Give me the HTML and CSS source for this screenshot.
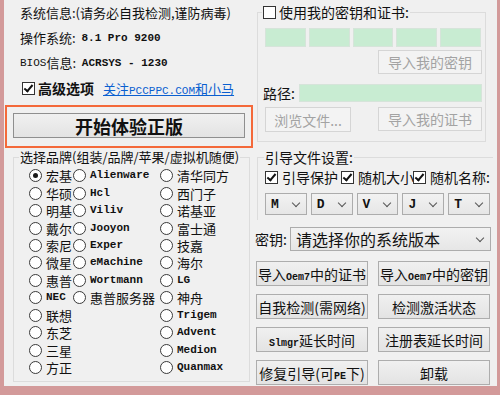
FILE: index.html
```html
<!DOCTYPE html>
<html lang="zh-CN">

<head>
	<meta charset="UTF-8" />
	<meta name="viewport" content="width=device-width, initial-scale=1.0" />
	<title>小马激活</title>
	<link rel="stylesheet" href="styles.css">
</head>

<body>
	<div class="window">
		<div class="left">
			<div class="info">
				<div class="line">系统信息:(请务必自我检测,谨防病毒)</div>
				<div class="line">操作系统:  <span class="mono">8.1 Pro 9200</span></div>
				<div class="line"><span class="mono-n">BIOS</span>信息:  <span class="mono">ACRSYS - 1230</span></div>
				<div class="line">
					<span class="check on"></span><b class="adv">高级选项</b>
					<a class="link" href="#">关注<span class="mono-link">PCCPPC.COM</span>和小马</a>
				</div>
			</div>

			<div class="start_wrap">
				<div class="btn start">开始体验正版</div>
			</div>

			<fieldset class="group brands">
				<legend>选择品牌(组装/品牌/苹果/虚拟机随便)</legend>
				<div class="brand_grid">
					<label class="opt"><span class="radio on"></span>宏基</label>
					<label class="opt"><span class="radio"></span><span class="mono">Alienware</span></label>
					<label class="opt"><span class="radio"></span>清华同方</label>

					<label class="opt"><span class="radio"></span>华硕</label>
					<label class="opt"><span class="radio"></span><span class="mono">Hcl</span></label>
					<label class="opt"><span class="radio"></span>西门子</label>

					<label class="opt"><span class="radio"></span>明基</label>
					<label class="opt"><span class="radio"></span><span class="mono">Viliv</span></label>
					<label class="opt"><span class="radio"></span>诺基亚</label>

					<label class="opt"><span class="radio"></span>戴尔</label>
					<label class="opt"><span class="radio"></span><span class="mono">Jooyon</span></label>
					<label class="opt"><span class="radio"></span>富士通</label>

					<label class="opt"><span class="radio"></span>索尼</label>
					<label class="opt"><span class="radio"></span><span class="mono">Exper</span></label>
					<label class="opt"><span class="radio"></span>技嘉</label>

					<label class="opt"><span class="radio"></span>微星</label>
					<label class="opt"><span class="radio"></span><span class="mono">eMachine</span></label>
					<label class="opt"><span class="radio"></span>海尔</label>

					<label class="opt"><span class="radio"></span>惠普</label>
					<label class="opt"><span class="radio"></span><span class="mono">Wortmann</span></label>
					<label class="opt"><span class="radio"></span><span class="mono">LG</span></label>

					<label class="opt"><span class="radio"></span><span class="mono">NEC</span></label>
					<label class="opt"><span class="radio"></span>惠普服务器</label>
					<label class="opt"><span class="radio"></span>神舟</label>

					<label class="opt"><span class="radio"></span>联想</label>
					<span></span>
					<label class="opt"><span class="radio"></span><span class="mono">Trigem</span></label>

					<label class="opt"><span class="radio"></span>东芝</label>
					<span></span>
					<label class="opt"><span class="radio"></span><span class="mono">Advent</span></label>

					<label class="opt"><span class="radio"></span>三星</label>
					<span></span>
					<label class="opt"><span class="radio"></span><span class="mono">Medion</span></label>

					<label class="opt"><span class="radio"></span>方正</label>
					<span></span>
					<label class="opt"><span class="radio"></span><span class="mono">Quanmax</span></label>
				</div>
			</fieldset>
		</div>

		<div class="right">
			<fieldset class="group mykey">
				<legend><span class="check"></span>使用我的密钥和证书:</legend>
				<div class="key_boxes">
					<div class="field"></div>
					<div class="field"></div>
					<div class="field"></div>
					<div class="field"></div>
					<div class="field"></div>
				</div>
				<div class="row_end">
					<div class="btn off w104">导入我的密钥</div>
				</div>
				<div class="path_row">
					<span class="path_label">路径:</span>
					<div class="field path"></div>
				</div>
				<div class="row_split">
					<div class="btn off w86">浏览文件...</div>
					<div class="btn off w104">导入我的证书</div>
				</div>
			</fieldset>

			<fieldset class="group boot">
				<legend>引导文件设置:</legend>
				<div class="boot_checks">
					<label class="opt c1"><span class="check on"></span>引导保护</label>
					<label class="opt c2"><span class="check on"></span>随机大小</label>
					<label class="opt"><span class="check on"></span>随机名称:</label>
				</div>
				<div class="boot_combos">
					<div class="combo"><span class="mono">M</span><span class="chev"></span></div>
					<div class="combo"><span class="mono">D</span><span class="chev"></span></div>
					<div class="combo"><span class="mono">V</span><span class="chev"></span></div>
					<div class="combo"><span class="mono">J</span><span class="chev"></span></div>
					<div class="combo"><span class="mono">T</span><span class="chev"></span></div>
				</div>
			</fieldset>

			<div class="key_row">
				<span>密钥:</span>
				<div class="combo big"><span>请选择你的系统版本</span><span class="chev"></span></div>
			</div>

			<div class="actions">
				<div class="btn"><span>导入<span class="mono-s">Oem7</span>中的证书</span></div>
				<div class="btn"><span>导入<span class="mono-s">Oem7</span>中的密钥</span></div>
				<div class="btn"><span>自我检测(需网络)</span></div>
				<div class="btn"><span>检测激活状态</span></div>
				<div class="btn"><span><span class="mono-s">Slmgr</span>延长时间</span></div>
				<div class="btn"><span>注册表延长时间</span></div>
				<div class="btn"><span>修复引导(可<span class="mono-s">PE</span>下)</span></div>
				<div class="btn"><span>卸载</span></div>
			</div>
		</div>
	</div>
</body>

</html>
```

FILE: styles.css
```css
html,
body {
	margin: 0;
	padding: 0;
}

body {
	width: 500px;
	height: 395px;
	background-color: #d39a9a;
	font-family: "Noto Sans CJK SC", "Noto Sans", sans-serif;
	font-size: 13px;
	color: #111;
	overflow: hidden;
}

.window {
	display: flex;
	margin: 0 3px 0 4px;
	height: 386px;
	background-color: #f0f0f0;
}

.mono {
	font-family: "Liberation Mono", monospace;
	font-size: 11px;
	font-weight: bold;
}

.mono-n {
	font-family: "Liberation Mono", monospace;
	font-size: 11px;
}

.mono-s {
	font-family: "Liberation Mono", monospace;
	font-size: 10px;
	font-weight: bold;
}

/* left side */

.left {
	width: 250px;
	flex: none;
}

.info {
	padding-left: 16px;
}

.line {
	display: flex;
	align-items: center;
	height: 25px;
	white-space: pre;
}

.line:last-child {
	height: 26px;
	padding-left: 2px;
}

.adv {
	font-size: 14px;
	margin-left: 3px;
}

.link {
	margin-left: 9px;
	color: #0a5fd0;
	text-decoration: underline;
	font-size: 13px;
}

.mono-link {
	font-family: "Liberation Mono", monospace;
	font-size: 11px;
}

.start_wrap {
	margin: 4px 0 0 1px;
	width: 248px;
	box-sizing: border-box;
	border: 2px solid #f4693a;
	padding: 6px 6px 8px 6px;
}

.btn {
	display: flex;
	align-items: center;
	justify-content: center;
	box-sizing: border-box;
	border: 1px solid #adadad;
	background: linear-gradient(#f0f0f0, #e3e3e3);
	font-size: 14px;
	white-space: pre;
}

.btn.off {
	border-color: #d5d5d5;
	background: #f3f3f3;
	color: #a3a3a3;
}

.start {
	height: 25px;
	font-size: 18px;
	font-weight: bold;
	border-color: #8f8f8f;
}

.group {
	margin: 0;
	padding: 0;
	border: 1px solid #dcdcdc;
	min-width: 0;
}

.group legend {
	padding: 0 1px;
	line-height: 16px;
}

.brands {
	margin: 1px 0 0 9px;
	width: 237px;
	box-sizing: border-box;
	height: 233px;
}

.brands legend {
	margin-left: 5px;
}

.brand_grid {
	display: grid;
	grid-template-columns: 44px 87px 1fr;
	grid-auto-rows: 17.45px;
	padding: 2px 0 0 15px;
}

.opt {
	display: flex;
	align-items: center;
	gap: 4px;
	font-size: 13px;
	line-height: 17px;
	white-space: nowrap;
}

.radio {
	flex: none;
	width: 13px;
	height: 13px;
	box-sizing: border-box;
	border: 1px solid #3a3a3a;
	border-radius: 50%;
	background-color: #fff;
	display: flex;
	align-items: center;
	justify-content: center;
}

.radio.on::after {
	content: "";
	width: 5px;
	height: 5px;
	border-radius: 50%;
	background-color: #1a1a1a;
}

.check {
	flex: none;
	display: inline-block;
	width: 13px;
	height: 13px;
	box-sizing: border-box;
	border: 1px solid #333;
	background-color: #fff;
	position: relative;
}

.check.on::after {
	content: "";
	position: absolute;
	left: 3px;
	top: 0px;
	width: 3px;
	height: 7px;
	border: solid #111;
	border-width: 0 2px 2px 0;
	transform: rotate(40deg);
}

/* right side */

.right {
	flex: 1;
	padding: 4px 0 0 3px;
}

.mykey {
	width: 229px;
	box-sizing: border-box;
	padding: 0 4px 9px 7px;
}

.mykey legend {
	display: flex;
	align-items: center;
	gap: 3px;
	margin-left: -3px;
	font-size: 14px;
}

.field {
	background-color: #c8ecd2;
	border: 1px solid #d6e4da;
	box-sizing: border-box;
}

.key_boxes {
	display: grid;
	grid-template-columns: repeat(5, 1fr);
	gap: 3px;
	margin-top: 8px;
	height: 19px;
}

.row_end {
	display: flex;
	justify-content: flex-end;
	margin: 3px -1px 0 0;
}

.w104 {
	width: 104px;
	height: 24px;
}

.w86 {
	width: 86px;
	height: 25px;
}

.path_row {
	display: flex;
	align-items: center;
	gap: 4px;
	margin: 9px -1px 0 -2px;
}

.path_label {
	font-size: 14px;
}

.path {
	flex: 1;
	height: 18px;
}

.row_split {
	display: flex;
	justify-content: space-between;
	margin: 4px -1px 0 0;
}

.boot {
	margin-top: 7px;
	width: 236px;
	box-sizing: border-box;
	padding: 0 0 5px 7px;
	border-right: none;
	border-bottom: none;
}

.boot legend {
	margin-left: -1px;
	font-size: 14px;
}

.boot_checks {
	display: flex;
	height: 20px;
	margin-top: 2px;
}

.boot_checks .opt {
	font-size: 14px;
}

.c1 {
	width: 76px;
}

.c2 {
	width: 72px;
}

.boot_combos {
	display: grid;
	grid-template-columns: repeat(5, 1fr);
	gap: 4px;
	margin-top: 6px;
	width: 225px;
}

.combo {
	display: flex;
	align-items: center;
	justify-content: space-between;
	height: 22px;
	box-sizing: border-box;
	border: 1px solid #acacac;
	background: linear-gradient(#f2f2f2, #e6e6e6);
	padding: 0 5px 0 5px;
}

.combo .mono {
	font-size: 13px;
}

.chev {
	width: 5px;
	height: 5px;
	border: solid #555;
	border-width: 0 1.5px 1.5px 0;
	transform: rotate(45deg);
	margin: 0 2px 3px 0;
}

.key_row {
	display: flex;
	align-items: center;
	gap: 3px;
	margin: 7px 0 0 -2px;
	font-size: 14px;
}

.combo.big {
	width: 201px;
	height: 24px;
	font-size: 16px;
}

.actions {
	display: grid;
	grid-template-columns: 112px 112px;
	column-gap: 10px;
	row-gap: 8px;
	grid-auto-rows: 25px;
	margin: 10px 0 0 -1px;
}
```
